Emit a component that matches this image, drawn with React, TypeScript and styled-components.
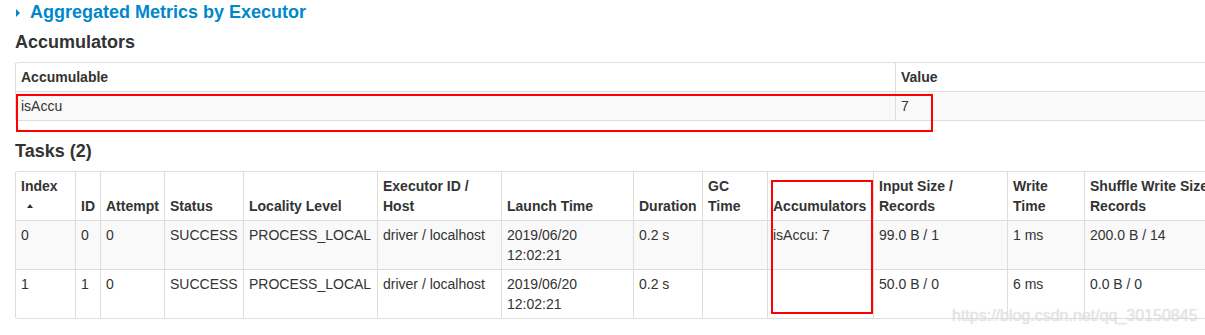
import React from 'react';
import styled, { createGlobalStyle } from 'styled-components';

const GlobalStyle = createGlobalStyle`
  html, body {
    margin: 0;
    padding: 0;
    background: #fff;
    overflow: hidden;
  }
  body {
    font-family: "Liberation Sans", Arial, Helvetica, sans-serif;
    font-size: 14px;
    line-height: 20px;
    color: #333;
  }
  * {
    box-sizing: border-box;
  }
`;

const Page = styled.div`
  position: relative;
  width: 1600px;
  padding: 2px 0 0 15px;
`;

const SectionTitle = styled.h4`
  margin: 0 0 10px;
  font-size: 18px;
  line-height: 20px;
  font-weight: bold;
  color: #0088cc;
  display: flex;
  align-items: center;
`;

const ClosedArrow = styled.span`
  display: inline-block;
  width: 0;
  height: 0;
  border-top: 4px solid transparent;
  border-bottom: 4px solid transparent;
  border-left: 4px solid #0088cc;
  margin: 0 10px 0 1px;
  position: relative;
  top: 1px;
`;

const Heading = styled.h4`
  margin: 10px 0;
  font-size: 18px;
  line-height: 20px;
  font-weight: bold;
  color: #333;
`;

const Table = styled.table<{ $width: number }>`
  width: ${(p) => p.$width}px;
  table-layout: fixed;
  border-collapse: separate;
  border-spacing: 0;
  border: 1px solid #ddd;
  border-left: 0;
  border-radius: 4px;
  margin-bottom: 20px;
`;

const Th = styled.th<{ $w?: number }>`
  ${(p) => (p.$w ? `width: ${p.$w}px;` : '')}
  padding: 4px 5px;
  text-align: left;
  vertical-align: bottom;
  font-weight: bold;
  border-left: 1px solid #ddd;
`;

const Row = styled.tr<{ $striped?: boolean }>`
  background: ${(p) => (p.$striped ? '#f9f9f9' : 'transparent')};
`;

const Td = styled.td`
  padding: 4px 5px;
  text-align: left;
  vertical-align: top;
  border-left: 1px solid #ddd;
  border-top: 1px solid #ddd;
`;

const SortArrow = styled.span`
  display: inline-block;
  width: 0;
  height: 0;
  margin-left: 6px;
  border-left: 3px solid transparent;
  border-right: 3px solid transparent;
  border-bottom: 4px solid #333;
  vertical-align: 3px;
`;

const Highlight = styled.div<{ $x: number; $y: number; $w: number; $h: number }>`
  position: absolute;
  left: ${(p) => p.$x}px;
  top: ${(p) => p.$y}px;
  width: ${(p) => p.$w}px;
  height: ${(p) => p.$h}px;
  border: 2px solid #f00;
  pointer-events: none;
`;

const Watermark = styled.div`
  position: absolute;
  left: 952px;
  top: 306px;
  font-size: 16px;
  line-height: 20px;
  color: rgba(232, 232, 232, 0.85);
  text-shadow: 0 0 1px rgba(175, 175, 175, 0.55);
  white-space: nowrap;
  pointer-events: none;
`;

const taskColumns: { label: React.ReactNode; w?: number }[] = [
  { label: <>Index<br /><SortArrow /></>, w: 60 },
  { label: 'ID', w: 25 },
  { label: 'Attempt', w: 64 },
  { label: 'Status', w: 79 },
  { label: 'Locality Level', w: 134 },
  { label: 'Executor ID / Host', w: 124 },
  { label: 'Launch Time', w: 132 },
  { label: 'Duration', w: 69 },
  { label: 'GC Time', w: 65 },
  { label: 'Accumulators', w: 106 },
  { label: 'Input Size / Records', w: 134 },
  { label: 'Write Time', w: 77 },
  { label: 'Shuffle Write Size / Records', w: 150 },
  { label: 'Errors' },
];

const tasks = [
  ['0', '0', '0', 'SUCCESS', 'PROCESS_LOCAL', 'driver / localhost', '2019/06/20 12:02:21', '0.2 s', '', 'isAccu: 7', '99.0 B / 1', '1 ms', '200.0 B / 14', ''],
  ['1', '1', '0', 'SUCCESS', 'PROCESS_LOCAL', 'driver / localhost', '2019/06/20 12:02:21', '0.2 s', '', '', '50.0 B / 0', '6 ms', '0.0 B / 0', ''],
];

export default function App() {
  return (
    <Page>
      <GlobalStyle />
      <SectionTitle>
        <ClosedArrow />
        Aggregated Metrics by Executor
      </SectionTitle>

      <Heading>Accumulators</Heading>
      <Table $width={1500}>
        <thead>
          <tr>
            <Th $w={880}>Accumulable</Th>
            <Th>Value</Th>
          </tr>
        </thead>
        <tbody>
          <Row $striped>
            <Td>isAccu</Td>
            <Td>7</Td>
          </Row>
        </tbody>
      </Table>

      <Heading>Tasks (2)</Heading>
      <Table $width={1500}>
        <thead>
          <tr>
            {taskColumns.map((c, i) => (
              <Th key={i} $w={c.w}>{c.label}</Th>
            ))}
          </tr>
        </thead>
        <tbody>
          {tasks.map((t, i) => (
            <Row key={i} $striped={i % 2 === 0}>
              {t.map((v, j) => (
                <Td key={j}>{v}</Td>
              ))}
            </Row>
          ))}
        </tbody>
      </Table>

      <Highlight $x={16} $y={94} $w={917} $h={38} />
      <Highlight $x={771} $y={180} $w={102} $h={134} />
      <Watermark>https://blog.csdn.net/qq_30150845</Watermark>
    </Page>
  );
}
